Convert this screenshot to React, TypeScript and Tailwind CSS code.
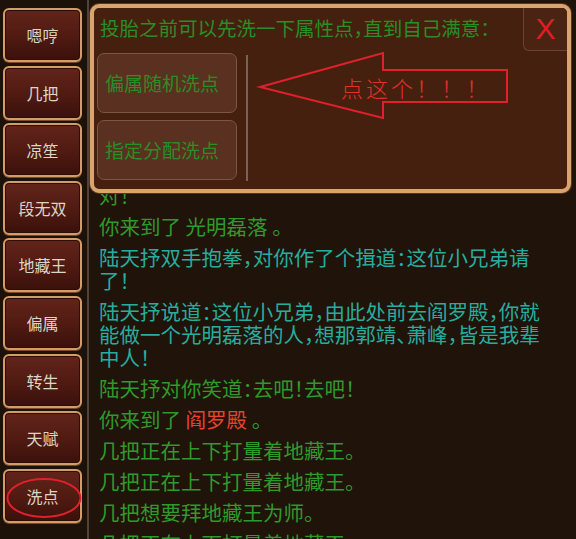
const sideButtons = ["嗯哼", "几把", "凉笙", "段无双", "地藏王", "偏属", "转生", "天赋", "洗点"];

type Seg = { text: string; color?: string };
type Msg = { color: string; lines: Seg[][] };

const GREEN = "text-[#2f9a2c]";
const CYAN = "text-[#26ad9f]";

const messages: Msg[] = [
  { color: GREEN, lines: [[{ text: "对！" }]] },
  { color: GREEN, lines: [[{ text: "你来到了 光明磊落 。" }]] },
  { color: CYAN, lines: [[{ text: "陆天抒双手抱拳，对你作了个揖道：这位小兄弟请" }], [{ text: "了！" }]] },
  {
    color: CYAN,
    lines: [
      [{ text: "陆天抒说道：这位小兄弟，由此处前去阎罗殿，你就" }],
      [{ text: "能做一个光明磊落的人，想那郭靖、萧峰，皆是我辈" }],
      [{ text: "中人！" }],
    ],
  },
  { color: GREEN, lines: [[{ text: "陆天抒对你笑道：去吧！去吧！" }]] },
  { color: GREEN, lines: [[{ text: "你来到了 " }, { text: "阎罗殿", color: "text-[#e8432c]" }, { text: " 。" }]] },
  { color: GREEN, lines: [[{ text: "几把正在上下打量着地藏王。" }]] },
  { color: GREEN, lines: [[{ text: "几把正在上下打量着地藏王。" }]] },
  { color: GREEN, lines: [[{ text: "几把想要拜地藏王为师。" }]] },
  { color: GREEN, lines: [[{ text: "几把正在上下打量着地藏王。" }]] },
];

function SideButton({ label, circled }: { label: string; circled?: boolean }) {
  return (
    <div className="relative h-[54px] w-[79px] shrink-0 rounded-[6px] border-2 border-[#d39c69] bg-gradient-to-b from-[#62241a] via-[#511b12] to-[#3a110b] shadow-[inset_0_0_0_1px_#2c0d07,0_1px_0_#7a4a2c] flex items-center justify-center">
      <span className="text-[16px] text-[#dcd6c6]">{label}</span>
      {circled && (
        <svg className="absolute left-[0px] top-[6px]" width="79" height="42" viewBox="0 0 79 42">
          <ellipse cx="39" cy="21" rx="36.5" ry="19" fill="none" stroke="#e0202c" strokeWidth="2" />
        </svg>
      )}
    </div>
  );
}

export default function App() {
  return (
    <div
      className="relative flex h-[539px] w-[576px] overflow-hidden bg-[#20130a] [font-feature-settings:'halt']"
      style={{ fontFamily: '"Noto Sans CJK SC", "Noto Sans", sans-serif' }}
    >
      {/* sidebar */}
      <div className="flex w-[87px] shrink-0 flex-col gap-[3.6px] bg-[#1d1209] pl-[3px] pt-[8px]">
        {sideButtons.map((b) => (
          <SideButton key={b} label={b} circled={b === "洗点"} />
        ))}
      </div>
      <div className="w-[2px] shrink-0 bg-[#4d443b]" />

      {/* chat log */}
      <div className="flex flex-1 flex-col gap-[8px] pl-[10px] pt-[184px] text-[20.5px] leading-[23px]">
        {messages.map((m, i) => (
          <div key={i} className={m.color}>
            {m.lines.map((line, k) => (
              <p key={k} className="whitespace-nowrap">
                {line.map((s, j) => (
                  <span key={j} className={s.color}>
                    {s.text}
                  </span>
                ))}
              </p>
            ))}
          </div>
        ))}
      </div>

      {/* popup */}
      <div className="absolute left-[90px] top-[4px] h-[189px] w-[481px] rounded-[9px] border-4 border-[#d9a46e] bg-[#46200f] shadow-[0_0_0_1px_#5a3520]">
        <div className="pl-[6px] pt-[7px] text-[19.5px] leading-[26px] text-[#2a8d25]">
          投胎之前可以先洗一下属性点，直到自己满意：
        </div>
        <div className="absolute right-0 top-0 flex h-[43px] w-[44px] items-center justify-center rounded-bl-[6px] rounded-tr-[5px] border-b border-l border-[#6c4231] bg-[#4b2313]">
          <span className="text-[30px] leading-none text-[#e21c24]" style={{ fontFamily: '"Liberation Sans", sans-serif' }}>
            X
          </span>
        </div>
        <div className="mt-[12px] flex pl-[3px]">
          <div className="flex flex-col gap-[7px]">
            <div className="flex h-[60px] w-[140px] items-center rounded-[7px] border border-[#7b5644] bg-[#5a3020] pl-[7px] text-[19px] text-[#2a8d25]">
              偏属随机洗点
            </div>
            <div className="flex h-[60px] w-[140px] items-center rounded-[7px] border border-[#7b5644] bg-[#5a3020] pl-[7px] text-[19px] text-[#2a8d25]">
              指定分配洗点
            </div>
          </div>
          <div className="ml-[9px] mt-[2px] h-[126px] w-[2px] bg-[#77625a]" />
        </div>

        {/* red arrow annotation */}
        <svg className="absolute left-[-4px] top-[-4px]" width="481" height="189" viewBox="0 0 481 189">
          <polygon
            points="170,83 293,49 293,66 417,66 417,98 293,98 293,114"
            fill="none"
            stroke="#e0202c"
            strokeWidth="2"
            strokeLinejoin="miter"
          />
        </svg>
        <div className="absolute left-[247px] top-[67px] text-[22px] font-light leading-[24px] tracking-[3px] text-[#e0302c] [font-feature-settings:normal]">
          点这个！！！
        </div>
      </div>
    </div>
  );
}
